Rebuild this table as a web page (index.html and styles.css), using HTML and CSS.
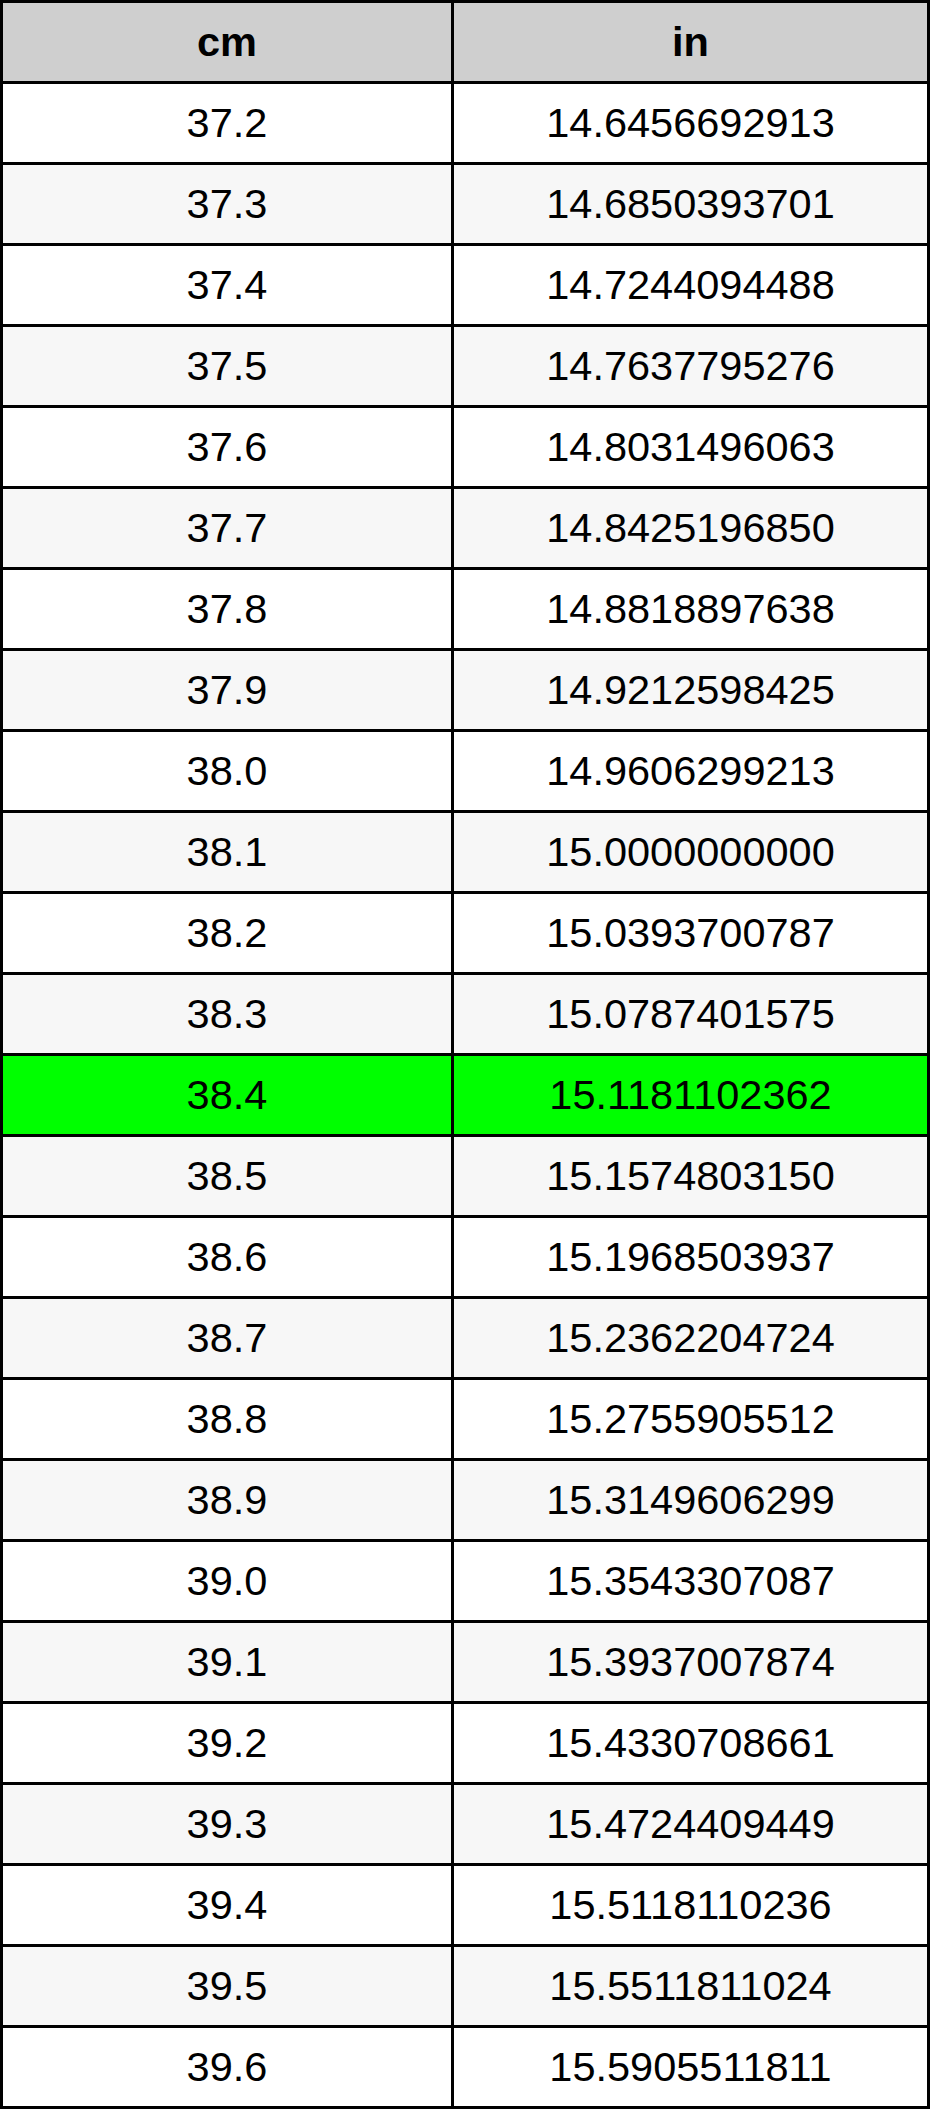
FILE: index.html
```html
<!DOCTYPE html>
<html lang="en">
<head>
<meta charset="utf-8">
<title>cm to in</title>
<link rel="stylesheet" href="styles.css">
</head>
<body>
<table class="conv">
<colgroup><col class="c1"><col class="c2"></colgroup>
<thead>
<tr><th>cm</th><th>in</th></tr>
</thead>
<tbody>
<tr><td>37.2</td><td>14.6456692913</td></tr>
<tr><td>37.3</td><td>14.6850393701</td></tr>
<tr><td>37.4</td><td>14.7244094488</td></tr>
<tr><td>37.5</td><td>14.7637795276</td></tr>
<tr><td>37.6</td><td>14.8031496063</td></tr>
<tr><td>37.7</td><td>14.8425196850</td></tr>
<tr><td>37.8</td><td>14.8818897638</td></tr>
<tr><td>37.9</td><td>14.9212598425</td></tr>
<tr><td>38.0</td><td>14.9606299213</td></tr>
<tr><td>38.1</td><td>15.0000000000</td></tr>
<tr><td>38.2</td><td>15.0393700787</td></tr>
<tr><td>38.3</td><td>15.0787401575</td></tr>
<tr class="hl"><td>38.4</td><td>15.1181102362</td></tr>
<tr><td>38.5</td><td>15.1574803150</td></tr>
<tr><td>38.6</td><td>15.1968503937</td></tr>
<tr><td>38.7</td><td>15.2362204724</td></tr>
<tr><td>38.8</td><td>15.2755905512</td></tr>
<tr><td>38.9</td><td>15.3149606299</td></tr>
<tr><td>39.0</td><td>15.3543307087</td></tr>
<tr><td>39.1</td><td>15.3937007874</td></tr>
<tr><td>39.2</td><td>15.4330708661</td></tr>
<tr><td>39.3</td><td>15.4724409449</td></tr>
<tr><td>39.4</td><td>15.5118110236</td></tr>
<tr><td>39.5</td><td>15.5511811024</td></tr>
<tr><td>39.6</td><td>15.5905511811</td></tr>
</tbody>
</table>
</body>
</html>
```

FILE: styles.css
```css
html, body {
  margin: 0;
  padding: 0;
  background: #ffffff;
}

.conv {
  width: 930px;
  table-layout: fixed;
  border-collapse: separate;
  border-spacing: 0;
  border-top: 3px solid #000;
  border-left: 3px solid #000;
  font-family: "Liberation Sans", Arial, sans-serif;
  font-size: 41.5px;
  color: #000;
}

.c1 { width: 451px; }
.c2 { width: 476px; }

.conv th,
.conv td {
  box-sizing: border-box;
  height: 81px;
  padding: 0;
  border-right: 3px solid #000;
  border-bottom: 3px solid #000;
  text-align: center;
  vertical-align: middle;
  line-height: 1;
}

.conv th {
  background: #cfcfcf;
  font-weight: bold;
}

.conv tbody tr:nth-child(odd) td { background: #ffffff; }
.conv tbody tr:nth-child(even) td { background: #f7f7f7; }
.conv tbody tr.hl td { background: #00ff00; }
```
